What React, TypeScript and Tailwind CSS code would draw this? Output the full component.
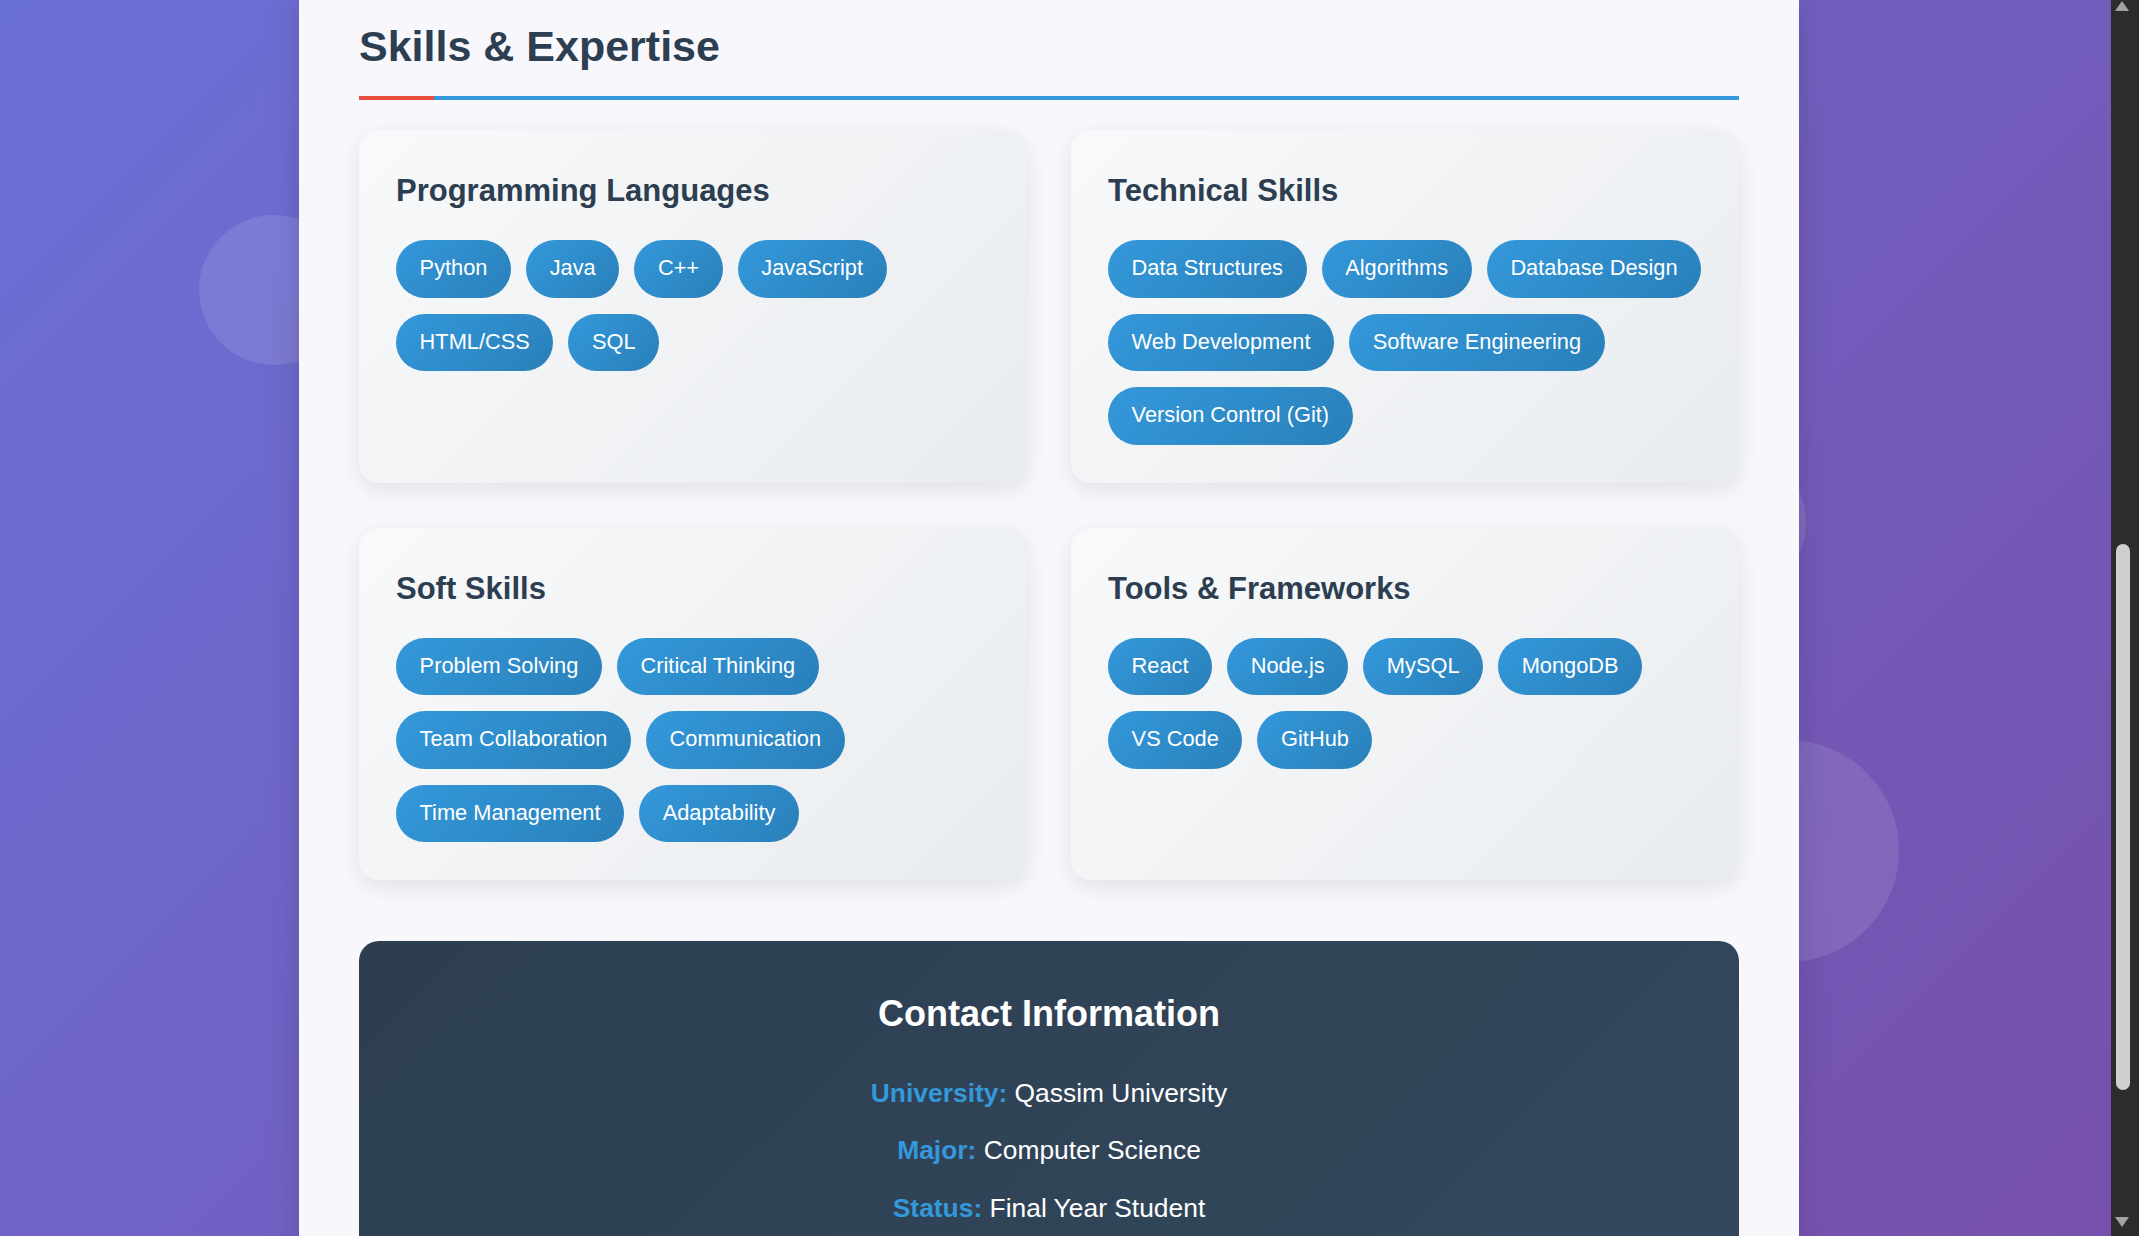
import React from "react"

type SkillGroup = {
  title: string
  items: string[]
}

const groups: SkillGroup[] = [
  { title: "Programming Languages", items: ["Python", "Java", "C++", "JavaScript", "HTML/CSS", "SQL"] },
  {
    title: "Technical Skills",
    items: ["Data Structures", "Algorithms", "Database Design", "Web Development", "Software Engineering", "Version Control (Git)"],
  },
  {
    title: "Soft Skills",
    items: ["Problem Solving", "Critical Thinking", "Team Collaboration", "Communication", "Time Management", "Adaptability"],
  },
  { title: "Tools & Frameworks", items: ["React", "Node.js", "MySQL", "MongoDB", "VS Code", "GitHub"] },
]

const contact = [
  { label: "University:", value: "Qassim University" },
  { label: "Major:", value: "Computer Science" },
  { label: "Status:", value: "Final Year Student" },
]

function SkillCard({ group }: { group: SkillGroup }) {
  return (
    <div className="rounded-[20px] bg-[linear-gradient(135deg,#f8f9fa_0%,#e9ecef_100%)] pl-[37px] pr-[36px] pt-[38px] pb-[38px] shadow-[0_7px_22px_rgba(0,0,0,0.09)]">
      <h3 className="mb-[27px] text-[31px] font-bold leading-[45px] text-[#2c3e50]">{group.title}</h3>
      <div className="flex flex-wrap gap-x-[15px] gap-y-[16px]">
        {group.items.map((item) => (
          <span
            key={item}
            className="flex h-[57.5px] items-center rounded-full bg-[linear-gradient(135deg,#3498db_0%,#2980b9_100%)] px-[23.6px] text-[21.8px] text-white"
          >
            {item}
          </span>
        ))}
      </div>
    </div>
  )
}

function Scrollbar() {
  return (
    <div className="flex h-full w-[28px] shrink-0 flex-col bg-[#2c2c2c]">
      <div className="flex h-[14px] justify-start pl-[4px] pt-[1px]">
        <div className="h-0 w-0 border-x-[7.5px] border-b-[10px] border-x-transparent border-b-[#a3a3a3]" />
      </div>
      <div className="h-[530px]" />
      <div className="ml-[5px] h-[546px] w-[14px] rounded-full bg-[#cfcfcf]" />
      <div className="flex-1" />
      <div className="flex h-[20px] justify-start pl-[4px] pt-[1px]">
        <div className="h-0 w-0 border-x-[7.5px] border-t-[10px] border-x-transparent border-t-[#a3a3a3]" />
      </div>
    </div>
  )
}

export default function App() {
  return (
    <div className="flex h-[1236px] w-full overflow-hidden font-['Liberation_Sans',Arial,sans-serif]">
      <div className="relative flex-1 overflow-hidden bg-[linear-gradient(135deg,#6b70d6_0%,#7650ac_100%)]">
        {/* floating circles */}
        <div className="absolute left-[199px] top-[215px] h-[150px] w-[150px] rounded-full bg-white/10" />
        <div className="absolute left-[1656px] top-[447px] h-[150px] w-[150px] rounded-full bg-white/10" />
        <div className="absolute left-[1677px] top-[740px] h-[222px] w-[222px] rounded-full bg-white/10" />

        <div className="relative z-10 ml-[299px] min-h-[1400px] w-[1500px] bg-[#f8f7fc] px-[60px] pt-[21px] shadow-[0_0_30px_rgba(0,0,0,0.15)]">
          <h2 className="relative border-b-4 border-[#3498db] pb-[25px] text-[43px] font-bold leading-[50px] text-[#2c3e50]">
            Skills &amp; Expertise
            <span className="absolute -bottom-[4px] left-0 h-[4px] w-[75px] bg-[#e74c3c]" />
          </h2>

          <div className="mt-[30px] grid grid-cols-2 gap-x-[44px] gap-y-[45px]">
            {groups.map((g) => (
              <SkillCard key={g.title} group={g} />
            ))}
          </div>

          <div className="mt-[61px] h-[400px] rounded-[20px] bg-[linear-gradient(135deg,#2c3e50_0%,#34495e_100%)] pt-[51.5px] text-center text-white">
            <h2 className="text-[36px] font-bold leading-[42.6px]">Contact Information</h2>
            <div className="mt-[30px]">
              {contact.map((c) => (
                <p key={c.label} className="text-[26.4px] leading-[57.3px]">
                  <span className="font-bold text-[#3498db]">{c.label}</span> {c.value}
                </p>
              ))}
            </div>
          </div>
        </div>
      </div>
      <Scrollbar />
    </div>
  )
}
